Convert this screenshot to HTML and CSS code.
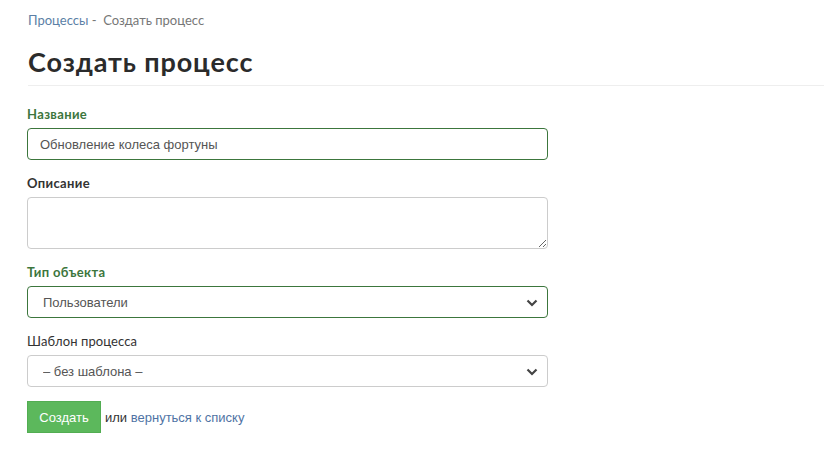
FILE: index.html
```html
<!DOCTYPE html>
<html lang="ru">
<head>
<meta charset="utf-8">
<link rel="stylesheet" href="styles.css">
</head>
<body>
<div class="page">
  <div class="crumbs"><a href="#" class="crumb-link">Процессы</a><span class="sep"> -&nbsp; </span><span class="crumb-current">Создать процесс</span></div>
  <h1 class="title">Создать процесс</h1>
  <form class="form">
    <div class="group success">
      <label class="label">Название</label>
      <input class="control" type="text" value="Обновление колеса фортуны">
    </div>
    <div class="group">
      <label class="label">Описание</label>
      <textarea class="control area"></textarea>
    </div>
    <div class="group success">
      <label class="label">Тип объекта</label>
      <div class="select-wrap">
        <select class="control select"><option>Пользователи</option></select>
        <svg class="chev" width="12" height="8" viewBox="0 0 12 8"><path d="M1.5 1.5 L6 6 L10.5 1.5" fill="none" stroke="#444" stroke-width="2.2"/></svg>
      </div>
    </div>
    <div class="group">
      <label class="label light">Шаблон процесса</label>
      <div class="select-wrap">
        <select class="control select"><option>– без шаблона –</option></select>
        <svg class="chev" width="12" height="8" viewBox="0 0 12 8"><path d="M1.5 1.5 L6 6 L10.5 1.5" fill="none" stroke="#444" stroke-width="2.2"/></svg>
      </div>
    </div>
    <div class="actions">
      <button type="button" class="btn">Создать</button>
      <span class="or">или <a href="#" class="back">вернуться к списку</a></span>
    </div>
  </form>
</div>
</body>
</html>
```
FILE: styles.css
```css
* { box-sizing: border-box; }
html, body { margin: 0; padding: 0; background: #fff; }
body { font-family: "Liberation Sans", Arial, sans-serif; font-size: 13px; color: #333; }
.page { padding: 10px 0 0 27px; }
.crumbs { font-family: "Lato", "Liberation Sans", sans-serif; font-size: 13px; line-height: 20px; color: #777; padding-left: 1px; }
.crumb-link { color: #5b7fa6; text-decoration: none; }
.sep { color: #777; }
.title { font-family: "Lato", "Liberation Sans", sans-serif; font-weight: 700; font-size: 27px; line-height: 34px; color: #2b2b2b; margin: 15px 0 0 1px; padding-bottom: 6px; border-bottom: 1px solid #eee; letter-spacing: 0.9px; }
.form { width: 521px; margin-top: 19px; }
.group { margin-bottom: 14px; display: flex; flex-direction: column; }
.label { font-family: "Lato", "Liberation Sans", sans-serif; font-weight: 700; font-size: 13px; line-height: 18px; margin-bottom: 5px; color: #333; letter-spacing: 0.35px; }
.label.light { font-weight: 400; letter-spacing: 0.1px; }
.success .label { color: #3c763d; }
.control { width: 521px; height: 32px; border: 1px solid #ccc; border-radius: 4px; padding: 0 12px; font-family: "Liberation Sans", Arial, sans-serif; font-size: 13px; color: #555; background: #fff; outline: none; }
.success .control { border-color: #3c763d; }
.area { height: 52px; resize: vertical; padding: 6px 12px; }
.select-wrap { position: relative; }
.select { appearance: none; -webkit-appearance: none; padding-left: 15px; }
.chev { position: absolute; right: 10px; top: 13px; pointer-events: none; }
.actions { display: flex; align-items: center; gap: 4px; margin-top: 2px; }
.btn { background: #5cb85c; color: #fff; border: 1px solid #52ad52; border-radius: 0; height: 32px; width: 74px; font-family: "Liberation Sans", Arial, sans-serif; font-size: 13px; padding: 0; }
.or { color: #333; }
.back { color: #4f73a4; text-decoration: none; }
```
